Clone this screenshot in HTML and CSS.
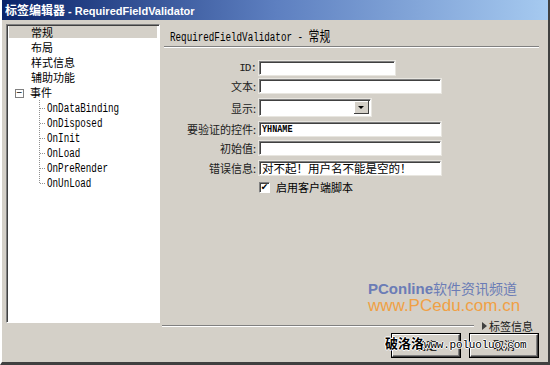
FILE: index.html
```html
<!DOCTYPE html>
<html lang="zh-CN">
<head>
    <meta charset="UTF-8">
    <title>标签编辑器 - RequiredFieldValidator</title>
    <link rel="stylesheet" href="styles.css">
</head>
<body>
    <div class="window">
        <div class="titlebar"><span class="cjk">标签编辑器</span> - RequiredFieldValidator</div>
        <div class="main">
            <div class="tree">
                <div class="node selected">常规</div>
                <div class="node">布局</div>
                <div class="node">样式信息</div>
                <div class="node">辅助功能</div>
                <div class="node parent"><span class="toggle">−</span>事件</div>
                <div class="children">
                    <div class="leaf"><span class="narrow">OnDataBinding</span></div>
                    <div class="leaf"><span class="narrow">OnDisposed</span></div>
                    <div class="leaf"><span class="narrow">OnInit</span></div>
                    <div class="leaf"><span class="narrow">OnLoad</span></div>
                    <div class="leaf"><span class="narrow">OnPreRender</span></div>
                    <div class="leaf"><span class="narrow">OnUnLoad</span></div>
                </div>
            </div>
            <div class="panel">
                <div class="heading"><span class="narrow">RequiredFieldValidator - <span class="cjk">常规</span></span></div>
                <div class="form">
                    <label class="mono">ID:</label>
                    <div class="field w-short"></div>
                    <label>文本:</label>
                    <div class="field w-long"></div>
                    <label class="sel-label">显示:</label>
                    <div class="select"><span class="arrow"></span></div>
                    <label>要验证的控件:</label>
                    <div class="field w-long value"><span class="narrow">YHNAME</span></div>
                    <label>初始值:</label>
                    <div class="field w-long"></div>
                    <label>错误信息:</label>
                    <div class="field w-long value">对不起！用户名不能是空的！</div>
                    <span></span>
                    <div class="check"><span class="box">✔</span>启用客户端脚本</div>
                </div>
                <div class="brand">
                    <div class="brand-top"><b>PConline</b>软件资讯频道</div>
                    <div class="brand-url">www.PCedu.com.cn</div>
                </div>
            </div>
        </div>
        <div class="footer">
            <div class="rule"></div>
            <div class="taginfo"><span class="tri"></span>标签信息</div>
        </div>
        <div class="buttons">
            <div class="btn">确定</div>
            <div class="btn">取消</div>
            <div class="stamp"><span class="cjk">破洛洛</span>www.poluoluo.com</div>
        </div>
    </div>
</body>
</html>
```

FILE: styles.css
```css
body {
    margin: 0;
    background: #d4d0c8;
    font-family: "Noto Sans CJK SC", "Liberation Sans", sans-serif;
    font-size: 11px;
    color: #000;
}

.window {
    width: 546px;
    height: 362px;
    border-left: 2px solid #fff;
    border-right: 2px solid #404040;
    border-bottom: 3px solid #404040;
    position: relative;
    overflow: hidden;
}

.titlebar {
    height: 20px;
    line-height: 20px;
    padding-left: 3px;
    background: linear-gradient(90deg, #0a246a, #5d7fc0 50%, #a6caf0);
    color: #fff;
    font-weight: bold;
    font-size: 11px;
    font-family: "Liberation Sans", "Noto Sans CJK SC", sans-serif;
    white-space: pre;
}

.titlebar .cjk {
    font-family: "Noto Sans CJK SC", sans-serif;
    font-size: 12px;
}

/* condensed monospace, like the bitmap font of the dialog */
.narrow {
    display: inline-block;
    font-family: "Liberation Mono", monospace;
    font-size: 12px;
    transform: scaleX(0.77);
    transform-origin: left center;
    white-space: pre;
}

.main {
    display: flex;
    padding: 4px 0 0 4px;
    height: 296px;
}

.tree {
    width: 150px;
    height: 297px;
    background: #fff;
    border-top: 1px solid #808080;
    border-left: 1px solid #808080;
    border-right: 1px solid #fff;
    border-bottom: 1px solid #fff;
    box-shadow: inset 1px 1px 0 #404040;
    padding: 0 0 0 2px;
}

.node {
    height: 15px;
    line-height: 15px;
    padding-left: 22px;
    white-space: nowrap;
}

.node.selected {
    height: 12px;
    line-height: 12px;
    margin: 1px 2px 2px 0;
    background: #d4d0c8;
}

.node.parent {
    padding-left: 6px;
}

.toggle {
    display: inline-block;
    width: 7px;
    height: 7px;
    border: 1px solid #808080;
    line-height: 6px;
    font-size: 10px;
    text-align: center;
    margin-right: 6px;
    vertical-align: 1px;
    font-family: "Liberation Sans", sans-serif;
}

.children {
    margin-left: 30px;
    border-left: 1px dotted #909090;
    height: 83px;
}

.leaf {
    height: 15px;
    line-height: 15px;
    padding-left: 7px;
    position: relative;
}

.leaf::before {
    content: "";
    position: absolute;
    left: 0;
    top: 8px;
    width: 5px;
    border-top: 1px dotted #909090;
}

.panel {
    flex: 1;
    padding-left: 4px;
    position: relative;
}

.heading {
    margin-right: 9px;
    padding: 5px 0 4px 6px;
    height: 13px;
    line-height: 13px;
    border-bottom: 1px solid #808080;
    box-shadow: 0 1px 0 #fff;
}

.heading .cjk {
    font-family: "Noto Sans CJK SC", sans-serif;
    font-size: 14px;
}

.form {
    display: grid;
    grid-template-columns: 92px auto;
    grid-template-rows: 18px 20px 23px 19px 20px 19px 14px;
    column-gap: 3px;
    align-items: start;
    margin-top: 14px;
}

.form label {
    text-align: right;
    height: 14px;
    line-height: 14px;
    color: #202020;
}

.form .mono {
    font-family: "Liberation Mono", monospace;
    font-size: 11px;
    letter-spacing: -1px;
}

.form .sel-label {
    margin-top: 2px;
}

.field,
.select {
    height: 12px;
    background: #fff;
    border-top: 1px solid #808080;
    border-left: 1px solid #808080;
    border-right: 1px solid #fff;
    border-bottom: 1px solid #fff;
    box-shadow: inset 1px 1px 0 #404040, 0 0 0 1px #e8e6e0;
}

.w-short { width: 134px; }
.w-long { width: 180px; }

.value {
    line-height: 12px;
    padding-left: 2px;
    width: 178px;
    white-space: nowrap;
    font-size: 11.5px;
}

.value .narrow {
    font-size: 11px;
    font-weight: bold;
    vertical-align: top;
}

.select {
    width: 110px;
    height: 15px;
    position: relative;
}

.arrow {
    position: absolute;
    right: 1px;
    top: 1px;
    width: 14px;
    height: 12px;
    background: #d4d0c8;
    border-right: 1px solid #404040;
    border-bottom: 1px solid #404040;
    box-shadow: inset 1px 1px 0 #fff;
}

.arrow::after {
    content: "";
    position: absolute;
    left: 4px;
    top: 5px;
    border-left: 3px solid transparent;
    border-right: 3px solid transparent;
    border-top: 3px solid #000;
}

.check {
    display: flex;
    align-items: center;
    height: 14px;
}

.box {
    width: 9px;
    height: 9px;
    background: #fff;
    border-top: 1px solid #808080;
    border-left: 1px solid #808080;
    border-right: 1px solid #fff;
    border-bottom: 1px solid #fff;
    box-shadow: inset 1px 1px 0 #404040;
    font-size: 9px;
    line-height: 9px;
    text-align: center;
    margin-right: 6px;
    font-family: "DejaVu Sans", sans-serif;
}

.brand {
    position: absolute;
    left: 208px;
    top: 256px;
}

.brand-top {
    color: #6b7cb6;
    font-size: 14px;
    line-height: 17px;
    font-family: "Noto Sans CJK SC", sans-serif;
}

.brand-top b {
    font-family: "Liberation Sans", sans-serif;
    font-size: 15px;
}

.brand-url {
    color: #f0a045;
    font-size: 17px;
    line-height: 17px;
    font-family: "Liberation Sans", sans-serif;
}

.footer {
    display: flex;
    align-items: center;
    padding-left: 160px;
    height: 12px;
}

.rule {
    width: 312px;
    border-top: 1px solid #808080;
    border-bottom: 1px solid #fff;
}

.taginfo {
    margin-left: 8px;
    display: flex;
    align-items: center;
    color: #202020;
}

.tri {
    width: 0;
    height: 0;
    border-top: 4px solid transparent;
    border-bottom: 4px solid transparent;
    border-left: 5px solid #404040;
    margin-right: 2px;
}

.buttons {
    display: flex;
    justify-content: flex-end;
    gap: 10px;
    padding: 2px 10px 0 0;
    position: relative;
}

.btn {
    width: 66px;
    height: 21px;
    line-height: 21px;
    text-align: center;
    border-top: 1px solid #fff;
    border-left: 1px solid #fff;
    border-right: 1px solid #404040;
    border-bottom: 1px solid #404040;
    box-shadow: inset -1px -1px 0 #808080, 0 0 0 1px #000;
}

.stamp {
    position: absolute;
    left: 383px;
    top: 1px;
    font-family: "Liberation Mono", monospace;
    font-size: 11px;
    letter-spacing: -0.2px;
    color: #000;
    text-shadow: 1px 0 #fff, -1px 0 #fff, 0 1px #fff, 0 -1px #fff;
}

.stamp .cjk {
    font-family: "Noto Sans CJK SC", sans-serif;
    font-size: 13px;
    font-weight: bold;
    letter-spacing: 0;
}
```
